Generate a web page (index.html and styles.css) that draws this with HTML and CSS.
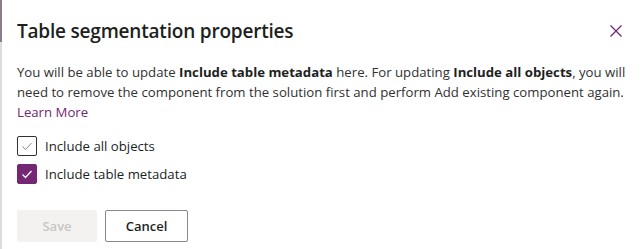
FILE: index.html
```html
<!DOCTYPE html>
<html>
  <head>
    <link rel="stylesheet" href="styles.css">
  </head>
  <body>
    <div class="edge">
      <div class="edge-top"></div>
      <div class="edge-bottom"></div>
    </div>
    <div class="panel">
      <header class="panel-header">
        <h1 class="panel-title">Table segmentation properties</h1>
        <button class="close-btn" aria-label="Close">
          <svg viewBox="0 0 12 12" width="12" height="12">
            <line x1="0.5" y1="0.5" x2="11.5" y2="11.5"></line>
            <line x1="11.5" y1="0.5" x2="0.5" y2="11.5"></line>
          </svg>
        </button>
      </header>

      <p class="description">
        You will be able to update <b>Include table metadata</b> here. For updating
        <b>Include all objects</b>, you will need to remove the component from the
        solution first and perform Add existing component again.
        <br><a class="link" href="#">Learn More</a>
      </p>

      <div class="options">
        <label class="option">
          <span class="checkbox">
            <svg viewBox="0 0 12 12" width="12" height="12">
              <polyline points="1.5 6.5 4.5 9.5 10.5 3"></polyline>
            </svg>
          </span>
          <span class="option-label">Include all objects</span>
        </label>
        <label class="option">
          <span class="checkbox checked">
            <svg viewBox="0 0 12 12" width="12" height="12">
              <polyline points="1.5 6.5 4.5 9.5 10.5 3"></polyline>
            </svg>
          </span>
          <span class="option-label">Include table metadata</span>
        </label>
      </div>

      <div class="actions">
        <button class="btn btn-disabled" disabled>Save</button>
        <button class="btn btn-default">Cancel</button>
      </div>
    </div>
  </body>
</html>
```

FILE: styles.css
```css
* {
  margin: 0;
  padding: 0;
  box-sizing: border-box;
}

body {
  display: flex;
  min-height: 100vh;
  background: #ffffff;
  font-family: "Open Sans", "Noto Sans", sans-serif;
  color: #201f1e;
}

.edge {
  width: 2px;
  display: flex;
  flex-direction: column;
}

.edge-top {
  height: 42px;
  background: #8c7d8c;
}

.edge-bottom {
  flex: 1;
  background: #dcdcdc;
}

.panel {
  flex: 1;
  padding: 0 0 0 15px;
}

.panel-header {
  display: flex;
  align-items: center;
  justify-content: space-between;
  height: 62px;
  padding-right: 21px;
}

.panel-title {
  font-size: 19px;
  font-weight: 600;
  letter-spacing: -0.2px;
  color: #201f1e;
}

.close-btn {
  display: flex;
  border: none;
  background: none;
  cursor: pointer;
}

.close-btn svg {
  stroke: #742774;
  stroke-width: 1.2;
}

.description {
  font-size: 13.2px;
  line-height: 20px;
  padding-right: 8px;
  color: #323130;
}

.description b {
  font-weight: 700;
  color: #201f1e;
}

.link {
  color: #742774;
  text-decoration: none;
}

.options {
  display: flex;
  flex-direction: column;
  gap: 8px;
  margin-top: 14px;
}

.option {
  display: flex;
  align-items: center;
  gap: 8px;
  height: 20px;
  font-size: 13.2px;
  color: #201f1e;
}

.checkbox {
  width: 20px;
  height: 20px;
  border: 1px solid #323130;
  border-radius: 2px;
  display: flex;
  align-items: center;
  justify-content: center;
  background: #ffffff;
}

.checkbox svg {
  fill: none;
  stroke: #8a8886;
  stroke-width: 1;
}

.checkbox.checked {
  background: #742774;
  border-color: #742774;
}

.checkbox.checked svg {
  stroke: #ffffff;
  stroke-width: 1.3;
}

.actions {
  display: flex;
  gap: 8px;
  margin-top: 26px;
}

.btn {
  height: 32px;
  border-radius: 2px;
  font-family: inherit;
  font-size: 13px;
  font-weight: 600;
}

.btn-disabled {
  width: 80px;
  border: none;
  background: #f3f2f1;
  color: #c8c6c4;
}

.btn-default {
  width: 83px;
  border: 1px solid #8a8886;
  background: #ffffff;
  color: #201f1e;
  cursor: pointer;
}
```
